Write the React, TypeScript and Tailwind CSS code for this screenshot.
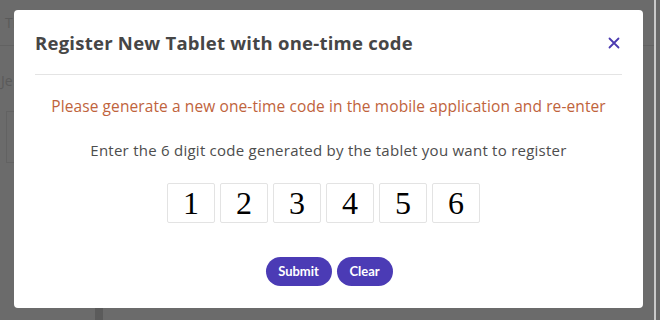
import React from "react";

export default function App() {
  const digits = ["1", "2", "3", "4", "5", "6"];
  return (
    <div className="relative w-[660px] h-[320px] overflow-hidden bg-[#6b6b6b]" style={{ fontFamily: "'Open Sans', sans-serif" }}>
      {/* underlying dimmed page */}
      <div className="flex h-full">
        <div className="w-[654px] flex flex-col">
          <div className="h-[46px] border-b border-[#626262] pl-[5px] pt-[12px] text-[14px] text-[#5a5a5a]">Tr</div>
          <div className="pl-[1px] pt-[24px] text-[14px] text-[#5a5a5a]">Je</div>
          <div className="ml-[6px] mt-[20px] h-[52px] w-[20px] border border-[#626262] border-r-0" />
          <div className="mt-auto ml-[95px] h-[12px] w-[8px] bg-[#5b5b5b]" />
        </div>
        <div className="w-[2px] bg-[#c9c9c9]" />
        <div className="flex-1 bg-[#686868]" />
      </div>

      {/* modal */}
      <div className="absolute left-[14px] top-[10px] w-[629px] h-[298px] bg-white rounded-[4px] px-[21px] flex flex-col">
        <div className="flex items-center justify-between h-[65px] border-b border-[#e4e4e4] pt-[2px]">
          <h2 className="text-[18.5px] font-bold text-[#464646] tracking-[0.25px]">
            Register New Tablet with one-time code
          </h2>
          <button className="mr-[2px] text-[#4b3ab0]">
            <svg width="12" height="12" viewBox="0 0 12 12" fill="none" stroke="currentColor" strokeWidth="1.8" strokeLinecap="round">
              <path d="M1.5 1.5 L10.5 10.5 M10.5 1.5 L1.5 10.5" />
            </svg>
          </button>
        </div>
        <p className="mt-[20px] text-center text-[15.5px] text-[#c0633c] tracking-[0.1px]">
          Please generate a new one-time code in the mobile application and re-enter
        </p>
        <p className="mt-[21px] text-center text-[15px] text-[#4d4d4d] tracking-[0.25px]">
          Enter the 6 digit code generated by the tablet you want to register
        </p>
        <div className="mt-[21px] flex justify-center gap-[5px] pr-[10px]">
          {digits.map((d) => (
            <div
              key={d}
              className="w-[48px] h-[40px] border border-[#e3e3e3] rounded-[2px] flex items-center justify-center text-[32px] text-black leading-none"
              style={{ fontFamily: "'Liberation Serif', serif" }}
            >
              {d}
            </div>
          ))}
        </div>
        <div className="mt-[34px] flex justify-center gap-[5px] pl-[1px]">
          <button className="h-[29px] w-[66px] rounded-full bg-[#4b3bb5] text-white text-[13px] font-bold" style={{ fontFamily: "Lato, sans-serif" }}>
            Submit
          </button>
          <button className="h-[29px] w-[56px] rounded-full bg-[#4b3bb5] text-white text-[13px] font-bold" style={{ fontFamily: "Lato, sans-serif" }}>
            Clear
          </button>
        </div>
      </div>
    </div>
  );
}
